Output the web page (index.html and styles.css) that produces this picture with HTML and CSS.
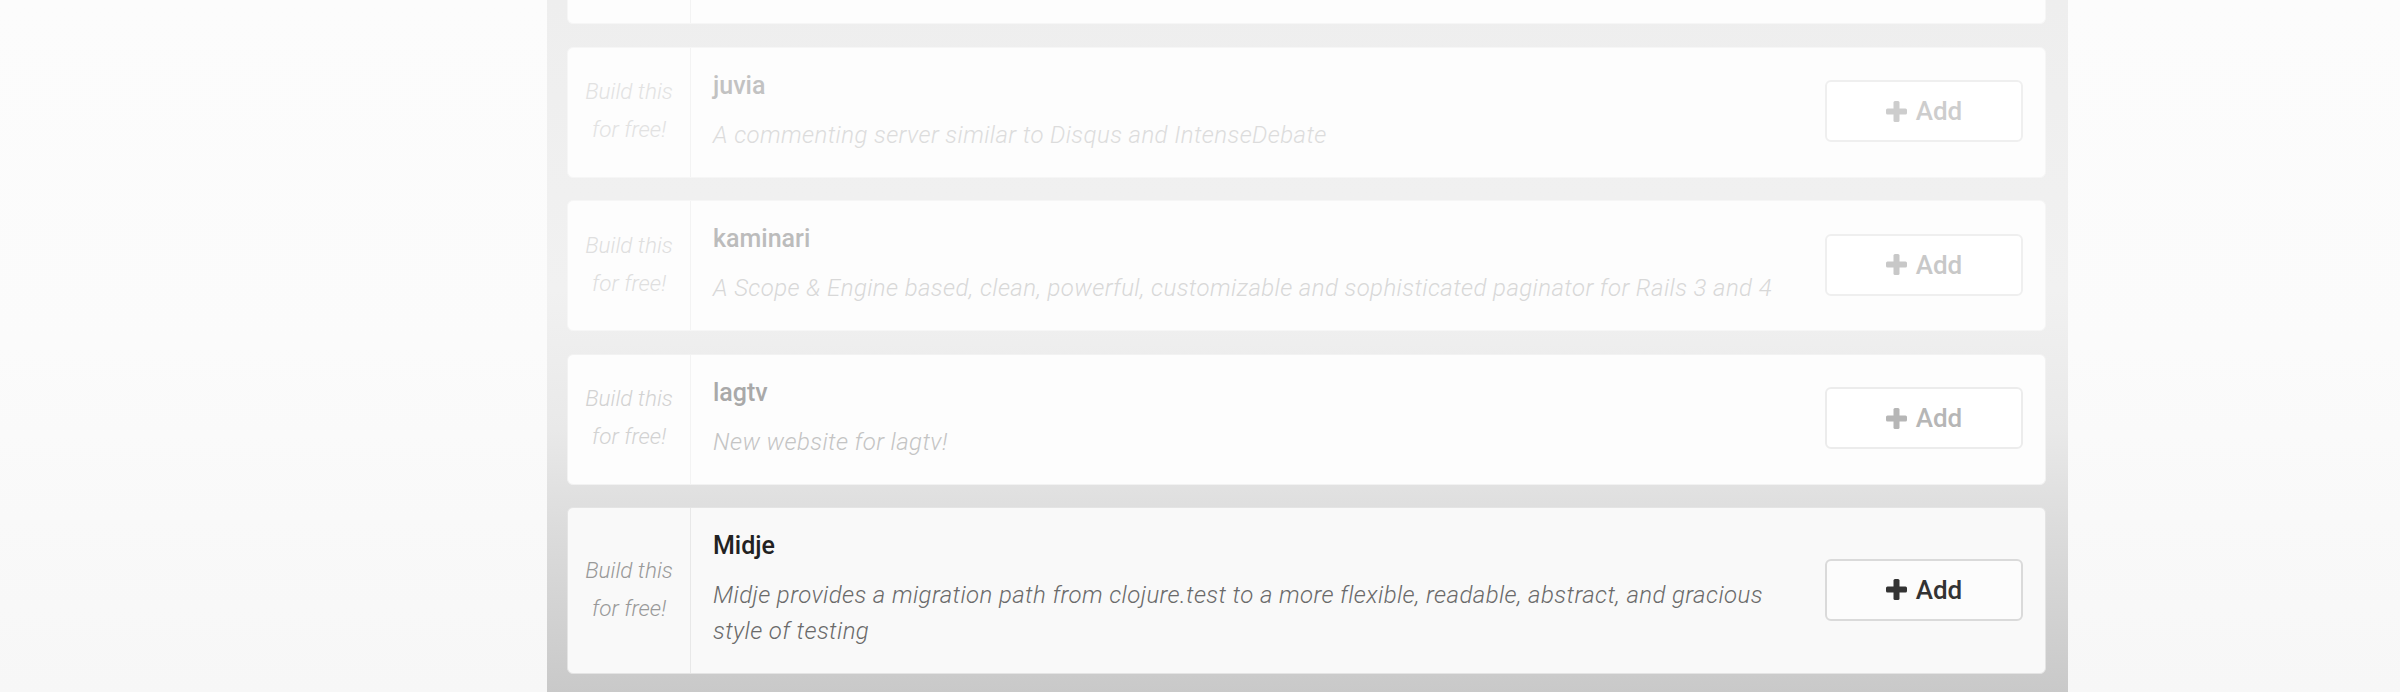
FILE: index.html
```html
<!DOCTYPE html>
<html lang="en">
<head>
<meta charset="utf-8">
<title>Build this for free</title>
<link rel="stylesheet" href="styles.css">
</head>
<body>
<div class="page">
  <div class="panel">
    <div class="list">
      <div class="card card-cut">
        <div class="card-left"></div>
        <div class="card-body"></div>
      </div>

      <div class="card fade-1">
        <div class="card-left"><span>Build this<br>for free!</span></div>
        <div class="card-body">
          <h3 class="title">juvia</h3>
          <p class="desc">A commenting server similar to Disqus and IntenseDebate</p>
        </div>
        <button class="btn"><svg class="plus" viewBox="0 0 21 21"><rect x="7.5" y="0" width="6" height="21" rx="1.5"/><rect x="0" y="7.5" width="21" height="6" rx="1.5"/></svg><span>Add</span></button>
      </div>

      <div class="card fade-2">
        <div class="card-left"><span>Build this<br>for free!</span></div>
        <div class="card-body">
          <h3 class="title">kaminari</h3>
          <p class="desc">A Scope &amp; Engine based, clean, powerful, customizable and sophisticated paginator for Rails 3 and 4</p>
        </div>
        <button class="btn"><svg class="plus" viewBox="0 0 21 21"><rect x="7.5" y="0" width="6" height="21" rx="1.5"/><rect x="0" y="7.5" width="21" height="6" rx="1.5"/></svg><span>Add</span></button>
      </div>

      <div class="card fade-3">
        <div class="card-left"><span>Build this<br>for free!</span></div>
        <div class="card-body">
          <h3 class="title">lagtv</h3>
          <p class="desc">New website for lagtv!</p>
        </div>
        <button class="btn"><svg class="plus" viewBox="0 0 21 21"><rect x="7.5" y="0" width="6" height="21" rx="1.5"/><rect x="0" y="7.5" width="21" height="6" rx="1.5"/></svg><span>Add</span></button>
      </div>

      <div class="card active">
        <div class="card-left"><span>Build this<br>for free!</span></div>
        <div class="card-body">
          <h3 class="title">Midje</h3>
          <p class="desc">Midje provides a migration path from clojure.test to a more flexible, readable, abstract, and gracious style of testing</p>
        </div>
        <button class="btn"><svg class="plus" viewBox="0 0 21 21"><rect x="7.5" y="0" width="6" height="21" rx="1.5"/><rect x="0" y="7.5" width="21" height="6" rx="1.5"/></svg><span>Add</span></button>
      </div>
    </div>
  </div>
</div>
</body>
</html>
```

FILE: styles.css
```css
html, body {
  margin: 0;
  padding: 0;
}

body {
  width: 2400px;
  height: 692px;
  overflow: hidden;
  font-family: Roboto, "Liberation Sans", sans-serif;
  background: linear-gradient(180deg, #fcfcfc 0%, #fbfbfb 50%, #f7f7f7 100%);
}

.page {
  height: 692px;
  padding-left: 547px;
  display: flex;
}

.panel {
  width: 1479px;
  height: 692px;
  padding: 0 22px 0 20px;
  background: linear-gradient(180deg, #eeeeee 0%, #f1f1f1 42%, #e9e9e9 62%, #dddddd 75%, #c9c9c9 100%);
}

.list {
  display: flex;
  flex-direction: column;
  gap: 22.5px;
}

.card {
  display: flex;
  align-items: stretch;
  background: #fdfdfd;
  border: 1px solid #f6f6f6;
  border-radius: 6px;
}

.card-cut {
  height: 23px;
  border-top: none;
  border-radius: 0 0 6px 6px;
}

.card-left {
  width: 122px;
  flex: none;
  border-right: 1px solid #f3f3f3;
  display: flex;
  align-items: center;
  justify-content: center;
  text-align: center;
  font-size: 22.5px;
  font-style: italic;
  font-weight: 300;
  line-height: 38px;
  padding-bottom: 4px;
}

.card-body {
  flex: 1;
  padding: 20px 22px 24px 22px;
}

.title {
  margin: 0 0 13px 0;
  font-size: 25px;
  font-weight: 500;
  line-height: 36px;
}

.desc {
  margin: 0;
  font-size: 24px;
  font-style: italic;
  font-weight: 300;
  letter-spacing: 0.4px;
  line-height: 36px;
  max-width: 1080px;
}

.btn {
  flex: none;
  align-self: center;
  width: 198px;
  height: 62px;
  margin-right: 22px;
  margin-bottom: 2px;
  background: #ffffff;
  border: 2px solid #efefef;
  border-radius: 6px;
  display: flex;
  align-items: center;
  justify-content: center;
  gap: 9px;
  font-family: Roboto, "Liberation Sans", sans-serif;
  font-size: 26px;
  font-weight: 500;
  padding: 0;
}

.plus {
  width: 21px;
  height: 21px;
  fill: currentColor;
}

/* fading states */
.fade-1 .card-left { color: #e2e2e2; }
.fade-1 .title { color: #c2c2c2; }
.fade-1 .desc { color: #dcdcdc; }
.fade-1 .btn { color: #cdcdcd; }

.fade-2 .card-left { color: #dfdfdf; }
.fade-2 .title { color: #bcbcbc; }
.fade-2 .desc { color: #d8d8d8; }
.fade-2 .btn { color: #c8c8c8; }

.fade-3 { border-color: #f2f2f2; }
.fade-3 .card-left { color: #d2d2d2; }
.fade-3 .title { color: #a9a9a9; }
.fade-3 .desc { color: #c4c4c4; }
.fade-3 .btn { color: #b6b6b6; border-color: #ececec; }

.active {
  background: #f9f9f9;
  border-color: #e4e4e4;
}
.active .card-left { color: #999999; border-right-color: #e8e8e8; }
.active .title { color: #222222; }
.active .desc { color: #6a6a6a; }
.active .btn { color: #333333; border-color: #dadada; background: #fcfcfc; }
```
